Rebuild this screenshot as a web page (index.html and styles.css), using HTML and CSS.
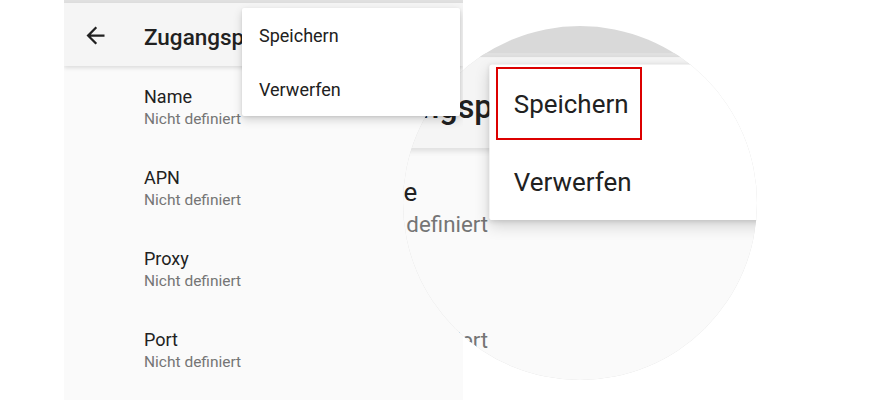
FILE: index.html
```html
<!DOCTYPE html>
<html lang="de">
<head>
<meta charset="utf-8">
<title>Zugangspunkt bearbeiten</title>
<link rel="stylesheet" href="styles.css">
</head>
<body>
<div class="stage">
  <div class="screen">
    <div class="statusbar"></div>
    <header class="appbar">
      <svg class="back" viewBox="0 0 24 24" width="27" height="27"><path d="M20 11H7.83l5.59-5.59L12 4l-8 8 8 8 1.41-1.41L7.83 13H20v-2z" fill="#212121"/></svg>
      <span class="title">Zugangspunkt bearbeiten</span>
    </header>
    <ul class="list">
      <li class="item"><div class="item-title">Name</div><div class="item-sub">Nicht definiert</div></li>
      <li class="item"><div class="item-title">APN</div><div class="item-sub">Nicht definiert</div></li>
      <li class="item"><div class="item-title">Proxy</div><div class="item-sub">Nicht definiert</div></li>
      <li class="item"><div class="item-title">Port</div><div class="item-sub">Nicht definiert</div></li>
    </ul>
    <div class="menu">
      <div class="menu-item">Speichern</div>
      <div class="menu-item">Verwerfen</div>
    </div>
  </div>

  <div class="loupe" aria-hidden="true">
    <div class="screen screen-zoom">
      <div class="statusbar"></div>
      <header class="appbar">
        <svg class="back" viewBox="0 0 24 24" width="27" height="27"><path d="M20 11H7.83l5.59-5.59L12 4l-8 8 8 8 1.41-1.41L7.83 13H20v-2z" fill="#212121"/></svg>
        <span class="title">Zugangspunkt bearbeiten</span>
      </header>
      <ul class="list">
        <li class="item"><div class="item-title">Name</div><div class="item-sub">Nicht definiert</div></li>
        <li class="item"><div class="item-title">APN</div><div class="item-sub">Nicht definiert</div></li>
        <li class="item"><div class="item-title">Proxy</div><div class="item-sub">Nicht definiert</div></li>
        <li class="item"><div class="item-title">Port</div><div class="item-sub">Nicht definiert</div></li>
      </ul>
      <div class="menu">
        <div class="menu-item">Speichern</div>
        <div class="menu-item">Verwerfen</div>
      </div>
    </div>
  </div>
  <div class="highlight"></div>
</div>
</body>
</html>
```
FILE: styles.css
```css
* { box-sizing: border-box; }
html, body { margin: 0; padding: 0; background: #ffffff; }
body { font-family: Roboto, "Noto Sans", sans-serif; color: #212121; }

.stage {
  position: relative;
  width: 879px;
  height: 400px;
  overflow: hidden;
  display: flex;
  padding-left: 64px;
}

.screen {
  position: relative;
  flex: 0 0 399px;
  width: 399px;
  height: 400px;
  background: #fafafa;
  overflow: hidden;
}

.statusbar { height: 3px; background: #e0e0e0; }

.appbar {
  position: relative;
  z-index: 1;
  height: 63px;
  display: flex;
  align-items: center;
  padding-left: 18px;
  background: #f5f5f5;
  box-shadow: 0 2px 4px rgba(0,0,0,0.12);
  white-space: nowrap;
}
.back { flex: none; margin-top: 2px; }
.title {
  margin-left: 35px;
  padding-top: 4px;
  font-size: 22.5px;
  font-weight: 500;
  color: #212121;
}

.list { list-style: none; margin: 0; padding: 0; }
.item { height: 81px; padding: 19px 0 0 80px; }
.item-title { font-size: 18px; line-height: 23px; color: #212121; }
.item-sub { font-size: 15.5px; line-height: 22px; color: #757575; }

.menu {
  position: absolute;
  z-index: 2;
  top: 8px;
  left: 178px;
  width: 218px;
  background: #ffffff;
  border-radius: 2px;
  box-shadow: 0 4px 10px rgba(0,0,0,0.16), 0 1px 3px rgba(0,0,0,0.10);
}
.menu-item {
  height: 54px;
  display: flex;
  align-items: center;
  padding-left: 17px;
  font-size: 18px;
  color: #212121;
}

.loupe {
  position: absolute;
  left: 403px;
  top: 26px;
  width: 354px;
  height: 354px;
  border-radius: 50%;
  overflow: hidden;
  background: #d9d9d9;
}
.screen-zoom {
  position: absolute;
  left: -170.3px;
  top: 26.5px;
  transform: scale(1.44);
  transform-origin: 0 0;
}

.highlight {
  position: absolute;
  left: 496px;
  top: 67px;
  width: 146px;
  height: 73px;
  border: 2px solid #dc0000;
}
```
